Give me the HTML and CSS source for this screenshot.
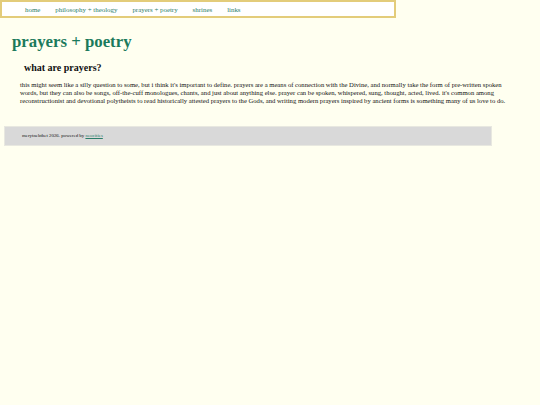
FILE: index.html
```html
<!DOCTYPE html>
<html>
<head>
	<meta charset="utf-8">
	<title>prayers + poetry</title>
	<link rel="stylesheet" href="styles.css">
</head>
<body>
	<nav class="topnav">
		<a href="#">home</a>
		<a href="#">philosophy + theology</a>
		<a href="#">prayers + poetry</a>
		<a href="#">shrines</a>
		<a href="#">links</a>
	</nav>
	<div class="main">
		<h1>prayers + poetry</h1>
		<h2>what are prayers?</h2>
		<p>this might seem like a silly question to some, but i think it's important to define. prayers are a means of connection with the Divine, and normally take the form of pre-written spoken words, but they can also be songs, off-the-cuff monologues, chants, and just about anything else. prayer can be spoken, whispered, sung, thought, acted, lived. it's common among reconstructionist and devotional polytheists to read historically attested prayers to the Gods, and writing modern prayers inspired by ancient forms is something many of us love to do.</p>
	</div>
	<div class="foot">
		merytnebthet 2026. powered by <a href="#">neocities</a>
	</div>
</body>
</html>
```
FILE: styles.css
```css
*{
	margin:0;
	padding:0;
	box-sizing:border-box;
}
body{
	background:#fffff0;
	font-family:"Liberation Serif",serif;
	color:#111;
}
.topnav{
	width:396px;
	height:18px;
	background:#fff;
	border:2px solid #e3cc7a;
	display:flex;
	align-items:center;
	gap:15px;
	padding-left:23px;
	font-size:6.9px;
}
.topnav a{
	color:#2a7d68;
	text-decoration:none;
}
.main{
	padding:14px 12px 0 12px;
}
h1{
	font-size:16.8px;
	color:#1b7a5c;
	line-height:20px;
}
h2{
	font-size:10px;
	margin:10px 0 0 12px;
	line-height:12px;
}
p{
	font-size:6.65px;
	line-height:8px;
	margin:7px 0 0 8px;
	width:497px;
}
.foot{
	margin:21px 0 0 4px;
	width:488px;
	height:20px;
	background:#d9d9d9;
	border:1px solid #e8e8e0;
	font-size:4.9px;
	padding:6px 0 0 17px;
}
.foot a{
	color:#2a7d68;
}
```
